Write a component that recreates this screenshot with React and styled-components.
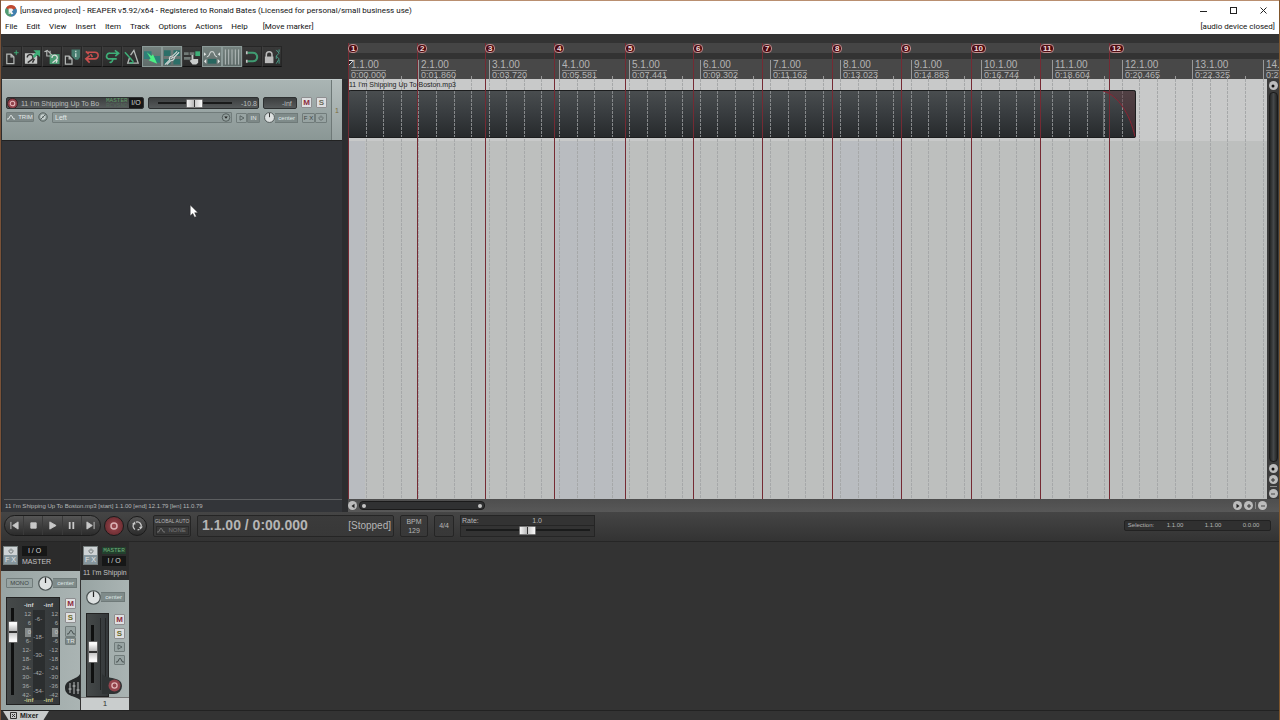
import React from "react"
import styled, { createGlobalStyle, css } from "styled-components"

const GlobalStyle = createGlobalStyle`
  * {
    box-sizing: border-box;
  }
  body {
    margin: 0;
    background: #333;
    font-family: "Liberation Sans", Arial, sans-serif;
  }
  button, input, select {
    margin: 0;
    padding: 0;
    border: 0;
    font: inherit;
    color: inherit;
    background: none;
  }
  svg {
    display: block;
    flex: none;
  }
`

const MEASURE = 70.35
const BEATS = 4

const markers = [0, 70, 138, 207, 278, 346, 415, 485, 554, 624, 693, 762]

const measures = [
  "0:00.000",
  "0:01.860",
  "0:03.720",
  "0:05.581",
  "0:07.441",
  "0:09.302",
  "0:11.162",
  "0:13.023",
  "0:14.883",
  "0:16.744",
  "0:18.604",
  "0:20.465",
  "0:22.325",
  "0:24.186",
]

const ITEM_WIDTH = 788

/* ---------- Window frame ---------- */

const Window = styled.div`
  min-height: 100vh;
  display: flex;
  flex-direction: column;
  border-left: 1px solid #7a5238;
  border-right: 1px solid #80562c;
  background: #333;
  overflow: hidden;
`

const TitleBar = styled.header`
  height: 20px;
  display: flex;
  align-items: center;
  padding-left: 4px;
  border-top: 1px solid #b98f70;
  background: #fff;
  color: #111;
  font: 8px/18px Roboto, sans-serif;
  h1 {
    flex: 1;
    margin: 0 0 0 3px;
    font: inherit;
    white-space: nowrap;
  }
`

const WindowButton = styled.button`
  width: 30px;
  height: 18px;
  display: flex;
  align-items: center;
  justify-content: center;
`

const MenuBar = styled.nav`
  height: 14px;
  display: flex;
  align-items: center;
  gap: 1px;
  background: #fff;
  color: #111;
  font: 8px/14px Roboto, sans-serif;
  padding: 0 4px 0 0;
`

const MenuItem = styled.button`
  padding: 0 4px;
  white-space: nowrap;
  margin-left: ${({ $gap }) => ($gap ? "6px" : "0")};
`

const DeviceStatus = styled.span`
  margin-left: auto;
`

const Main = styled.main`
  flex: 1;
  display: grid;
  grid-template-columns: 347px minmax(0, 1fr);
`

/* ---------- Left side ---------- */

const Side = styled.aside`
  position: relative;
  display: flex;
  flex-direction: column;
  padding-right: 6px;
  background: #2c2d2f;
`

const Toolbar = styled.div`
  height: 45px;
  margin-right: -6px;
  padding: 12px 0 0 1px;
  display: flex;
  background: #333;
`

const ToolButton = styled.button`
  width: 20px;
  height: 21px;
  display: flex;
  align-items: center;
  justify-content: center;
  border: 1px solid #262626;
  border-left-color: #404040;
  border-bottom-color: #111;
  background: linear-gradient(#393939, #2b2b2b);
  ${({ $on }) =>
    $on &&
    css`
      border-color: #8b9a98;
      background: linear-gradient(#75827f, #5f6c6a);
    `}
`

const TrackPanel = styled.section`
  height: 62px;
  display: flex;
  margin-left: 1px;
  border-top: 1px solid #c3cccc;
  border-bottom: 1px solid #222;
  background: linear-gradient(#aab5b4, #8a9795);
`

const TrackControls = styled.div`
  flex: 1;
  padding: 17px 4px 0 4px;
  display: flex;
  flex-direction: column;
  gap: 4px;
`

const Row = styled.div`
  height: 11px;
  display: flex;
  align-items: stretch;
  gap: 4px;
`

const TrackNumber = styled.div`
  width: 13px;
  display: flex;
  align-items: center;
  justify-content: center;
  border-left: 1px solid #6e7877;
  background: linear-gradient(#b6bfbe, #97a2a1);
  color: #7d6d3c;
  font-size: 7px;
`

const DarkBox = styled.div`
  width: ${({ $w }) => $w};
  height: 12px;
  display: flex;
  align-items: center;
  justify-content: space-between;
  padding: ${({ $pad }) => $pad || "0"};
  border: 1px solid #2d3031;
  border-radius: 2px;
  background: linear-gradient(#3c3f40, #55595a);
  color: #b9bdbd;
  font-size: 7px;
  white-space: nowrap;
  overflow: hidden;
`

const TrackName = styled.span`
  flex: 1;
  padding-left: 3px;
`

const MasterSend = styled.span`
  width: 23px;
  display: flex;
  flex-direction: column;
  color: #5f9a66;
  font: 6px/5px "Liberation Mono", monospace;
  span + span {
    color: #52695a;
  }
`

const MasterBadge = styled.span`
  height: 7px;
  margin: 1px 0 2px;
  background: #22402d;
  color: #6fae7c;
  font: 6px/7px "Liberation Mono", monospace;
  text-align: center;
`

const IoButton = styled.button`
  width: ${({ $w }) => $w};
  height: 10px;
  background: #161717;
  color: #d5d5d5;
  font-size: 7px;
  line-height: 10px;
`

const LightButton = styled.button`
  width: 11px;
  height: 11px;
  display: flex;
  align-items: center;
  justify-content: center;
  border: 1px solid #8e8e90;
  border-radius: 1px;
  background: #dedfe1;
  color: ${({ $color }) => $color || "#333"};
  font-size: 8px;
  font-weight: bold;
  line-height: 9px;
`

const FlatButton = styled.button`
  width: ${({ $w }) => $w};
  height: ${({ $h }) => $h || "10px"};
  display: flex;
  align-items: center;
  justify-content: center;
  gap: 3px;
  border: 1px solid #717c7b;
  border-radius: 1px;
  background: ${({ $solid }) => ($solid ? "#7d8887" : "#98a4a3")};
  color: ${({ $solid }) => ($solid ? "#e3e9e9" : "#3c4444")};
  font-size: 6px;
  line-height: 8px;
`

const Group = styled.div`
  display: flex;
  align-items: center;
  margin-left: ${({ $push }) => $push || "0"};
`

const InputSelect = styled.label`
  flex: 1;
  height: 11px;
  display: flex;
  align-items: center;
  border: 1px solid #717c7b;
  border-radius: 1px;
  background: #8c9897;
  select {
    flex: 1;
    height: 9px;
    padding-left: 2px;
    appearance: none;
    outline: 0;
    color: #e3e9e9;
    font-size: 7px;
    line-height: 9px;
  }
`

const Fader = styled.input.attrs({ type: "range" })`
  width: ${({ $w }) => $w};
  height: 9px;
  appearance: none;
  background: linear-gradient(#1a1b1b, #1a1b1b) center / 100% 2px no-repeat;
  &::-webkit-slider-thumb {
    appearance: none;
    width: 17px;
    height: 9px;
    border: 1px solid #777;
    border-radius: 1px;
    background: linear-gradient(
      90deg,
      #f4f4f4,
      #bbb 44%,
      #333 46% 54%,
      #ccc 56%,
      #fafafa
    );
  }
`

const VerticalFader = styled.input.attrs({ type: "range" })`
  width: 11px;
  height: ${({ $h }) => $h};
  margin-top: 7px;
  writing-mode: vertical-lr;
  direction: rtl;
  appearance: none;
  background: linear-gradient(#0f1010, #0f1010) center / 3px 100% no-repeat;
  &::-webkit-slider-thumb {
    appearance: none;
    width: 10px;
    height: 22px;
    border: 1px solid #666;
    border-radius: 1px;
    background: linear-gradient(
      #fafafa 0 10%,
      #b4b4b4 46%,
      #333 46% 54%,
      #c4c4c4 54%,
      #fafafa 90%
    );
  }
`

const EmptyTracks = styled.div`
  flex: 1;
  margin-left: 1px;
  background: #333539;
`

const StatusLine = styled.div`
  height: 13px;
  margin-left: 3px;
  border-top: 1px solid #5c5e60;
  background: #333539;
  color: #b5b7b8;
  font-size: 6px;
  line-height: 12px;
  white-space: nowrap;
  padding-left: 1px;
  box-shadow: -2px 0 0 #333539;
`

const Pointer = styled.svg`
  position: absolute;
  left: 188px;
  top: 170px;
`

/* ---------- Arrange view ---------- */

const Arrange = styled.section`
  position: relative;
  display: flex;
  flex-direction: column;
  overflow: hidden;
`

const MarkerLane = styled.div`
  height: 10px;
  margin-top: 9px;
  background: #454545;
`

const Ruler = styled.div`
  position: relative;
  height: 20px;
  margin-top: 6px;
  overflow: hidden;
  background: #484848;
  svg {
    width: 100%;
    height: 20px;
  }
`

const RulerLabel = styled.div`
  position: absolute;
  top: 1px;
  color: #b4b4b4;
  font-size: 9px;
  line-height: 9px;
  padding-left: 3px;
  b {
    display: block;
    border-bottom: 1px solid #8b8b8b;
    font-size: 10px;
    font-weight: normal;
    line-height: 10px;
  }
`

const ArrangeBody = styled.div`
  flex: 1;
  display: flex;
`

const Canvas = styled.div`
  position: relative;
  flex: 1;
  overflow: hidden;
  background: #bdbfbe;
`

const GridLines = styled.svg`
  position: absolute;
  width: 100%;
  height: 100%;
`

const MediaItem = styled.div`
  position: absolute;
  top: 0;
  left: 0;
  span {
    display: block;
    height: 11px;
    padding-left: 1px;
    color: #222;
    font-size: 7px;
    line-height: 12px;
  }
`

const MarkerPin = styled.div`
  position: absolute;
  top: 9px;
  bottom: 13px;
  border-left: 1px solid #752a33;
  span {
    display: block;
    min-width: 9px;
    height: 9px;
    margin: 1px 0 0 -1px;
    padding: 0 2px;
    border: 1px solid #c09090;
    border-radius: 4px;
    background: #4c0a10;
    color: #f0dcdc;
    font-size: 8px;
    font-weight: bold;
    line-height: 7px;
    text-align: center;
  }
`

const VScroll = styled.div`
  width: 12px;
  padding: 2px 0 1px;
  display: flex;
  flex-direction: column;
  align-items: center;
  gap: 2px;
  background: #3b3b3b;
`

const HScroll = styled.div`
  height: 13px;
  padding: 0 12px 0 0;
  display: flex;
  align-items: center;
  gap: 2px;
  background: linear-gradient(#4e4e4e, #585858);
`

const ScrollThumb = styled.div`
  border: 1px solid #1b1b1b;
  border-radius: 4px;
  background: #303132;
  display: flex;
  align-items: center;
  justify-content: space-between;
  ${({ $vertical }) =>
    $vertical
      ? css`
          flex: 1;
          width: 9px;
          background: linear-gradient(90deg, #242525, #45484a, #242525);
        `
      : css`
          width: 126px;
          height: 9px;
          padding: 0 2px;
          margin-right: auto;
        `}
`

const Dot = styled.i`
  width: 4px;
  height: 4px;
  border-radius: 50%;
  background: #c5c5c5;
`

const Divider = styled.i`
  width: ${({ $vertical }) => ($vertical ? "1px" : "7px")};
  height: ${({ $vertical }) => ($vertical ? "7px" : "1px")};
  background: #8a8a8a;
`

const RoundButton = styled.button`
  width: 9px;
  height: 9px;
  flex: none;
  display: flex;
  align-items: center;
  justify-content: center;
  border-radius: 50%;
  background: #bcbcbc;
`

/* ---------- Transport ---------- */

const Transport = styled.section`
  height: 30px;
  display: flex;
  align-items: center;
  padding: 0 8px 2px 3px;
  border-bottom: 1px solid #262626;
  background: linear-gradient(#454545, #333);
  color: #b5b5b5;
`

const TransportPill = styled.div`
  width: 97px;
  height: 21px;
  display: flex;
  border: 1px solid #1b1b1b;
  border-radius: 11px;
  background: linear-gradient(#555, #2b2b2b);
  button {
    flex: 1;
    display: flex;
    align-items: center;
    justify-content: center;
  }
  button + button {
    border-left: 1px solid #3a3a3a;
  }
`

const RoundTransport = styled.button`
  width: 20px;
  height: 20px;
  margin-left: 3px;
  display: flex;
  align-items: center;
  justify-content: center;
  border: 1px solid #1b1b1b;
  border-radius: 50%;
  background: ${({ $record }) =>
    $record
      ? "radial-gradient(#9b4a50, #5e2328)"
      : "linear-gradient(#555, #2b2b2b)"};
`

const Panel = styled.div`
  width: ${({ $w }) => $w};
  height: 22px;
  margin-left: 6px;
  display: flex;
  flex-direction: ${({ $row }) => ($row ? "row" : "column")};
  align-items: center;
  justify-content: ${({ $row }) => ($row ? "space-between" : "center")};
  padding: ${({ $row }) => ($row ? "0 2px 0 4px" : "0")};
  border: 1px solid #252525;
  border-radius: 2px;
  background: linear-gradient(#3b3b3b, #383838);
  font-size: 7px;
  line-height: 9px;
  white-space: nowrap;
  small {
    font-size: 5px;
    line-height: 9px;
  }
  button {
    width: 33px;
    height: 9px;
    display: flex;
    align-items: center;
    gap: 4px;
    border: 1px solid #2b2b2b;
    color: #777;
    font-size: 6px;
    line-height: 6px;
  }
`

const TimeText = styled.span`
  font-size: 14px;
  font-weight: bold;
`

const PlayState = styled.span`
  font-size: 10px;
`

const RatePanel = styled.label`
  width: 135px;
  height: 22px;
  margin-left: 6px;
  display: flex;
  flex-direction: column;
  align-items: center;
  border: 1px solid #252525;
  background: #333;
  font-size: 7px;
  line-height: 9px;
  div {
    align-self: stretch;
    display: grid;
    grid-template-columns: 1fr 1fr 1fr;
    padding-left: 1px;
    height: 10px;
    border-bottom: 1px solid #252525;
  }
  em {
    font-style: normal;
    justify-self: end;
    padding-right: 8px;
  }
`

const Selection = styled.div`
  width: 147px;
  height: 11px;
  margin-left: auto;
  padding-left: 1px;
  display: grid;
  grid-template-columns: 30px 1fr 1fr 1fr;
  border: 1px solid #222;
  border-radius: 2px;
  background: #303030;
  font-size: 6px;
  line-height: 9px;
  text-align: center;
`

/* ---------- Mixer ---------- */

const Mixer = styled.section`
  height: 168px;
  display: flex;
  gap: 1px;
  background: #333;
`

const Strip = styled.div`
  width: ${({ $w }) => $w};
  display: flex;
  flex-direction: column;
  background: #2b2b2b;
`

const StripHead = styled.div`
  height: ${({ $h }) => $h};
  display: flex;
  padding: 4px 0 0 2px;
  color: #c3c3c3;
  font-size: 7px;
  line-height: 10px;
  flex-wrap: wrap;
  align-content: flex-start;
  column-gap: 4px;
`

const FxStack = styled.div`
  width: 15px;
  height: 19px;
  display: flex;
  flex-direction: column;
  border: 1px solid #777f7f;
  background: #cfd4d6;
  button {
    height: 9px;
    display: flex;
    align-items: center;
    justify-content: center;
    font-size: 7px;
    line-height: 9px;
    color: #39424b;
  }
  button + button {
    background: #87979e;
    color: #e5eaea;
  }
`

const HeadColumn = styled.div`
  display: flex;
  flex-direction: column;
  color: #c3c3c3;
`

const HeadName = styled.span`
  line-height: ${({ $lh }) => $lh || "12px"};
  white-space: nowrap;
`

const StripBody = styled.div`
  position: relative;
  flex: 1;
  display: flex;
  flex-direction: column;
  padding: ${({ $top }) => $top} 3px 0 5px;
  background: linear-gradient(90deg, #98a4a3, #aab4b3);
`

const PanRow = styled.div`
  height: 16px;
  display: flex;
  align-items: center;
`

const PanLabel = styled.span`
  width: ${({ $w }) => $w || "24px"};
  height: 10px;
  padding-right: 2px;
  border: 1px solid #6f7a79;
  border-left: 0;
  background: #7f8b8a;
  color: #dfe6e6;
  font-size: 6px;
  line-height: 8px;
  text-align: right;
`

const FaderRow = styled.div`
  display: flex;
  gap: 5px;
  margin-top: ${({ $top }) => $top};
`

const MeterBox = styled.div`
  width: ${({ $w }) => $w};
  height: ${({ $h }) => $h};
  padding: ${({ $pad }) => $pad};
  display: flex;
  border: 1px solid #222;
  background: linear-gradient(90deg, #454949, #34383a);
`

const Scale = styled.div`
  flex: 1;
  display: flex;
  flex-direction: column;
  margin-left: 1px;
  color: #a9adad;
  font-size: 6px;
  line-height: 9px;
`

const Peaks = styled.div`
  display: flex;
  justify-content: space-around;
  font-weight: bold;
  line-height: ${({ $low }) => ($low ? "7px" : "9px")};
  color: ${({ $low }) => ($low ? "#c6c98a" : "#d5d7d7")};
`

const ScaleColumns = styled.div`
  display: flex;
  justify-content: space-between;
  margin-bottom: -3px;
`

const ScaleColumn = styled.div`
  width: 12px;
  display: flex;
  flex-direction: column;
  text-align: ${({ $align }) => $align};
  line-height: ${({ $step }) => $step};
  background: ${({ $bar }) => ($bar ? "#2b2e2f" : "transparent")};
  mark {
    width: 6px;
    margin-left: auto;
    background: #848989;
    color: #c8c8c8;
  }
`

const SideButtons = styled.div`
  display: flex;
  flex-direction: column;
  gap: 3px;
  padding-top: 1px;
`

const ChannelMeter = styled.div`
  width: 6px;
  height: 72px;
  margin-left: 2px;
  border-left: 1px solid #232525;
  border-right: 1px solid #232525;
`

const Corner = styled.div`
  position: absolute;
  right: ${({ $right }) => $right};
  bottom: ${({ $bottom }) => $bottom};
`

const StripNumber = styled.div`
  height: 13px;
  border-top: 1px solid #777;
  background: #c9cdcd;
  color: #333;
  font-size: 8px;
  line-height: 12px;
  text-align: center;
`

const Dock = styled.footer`
  height: 10px;
  padding-left: 2px;
  border-top: 1px solid #222;
  background: #333;
`

const DockTab = styled.button`
  width: 46px;
  height: 9px;
  display: flex;
  align-items: center;
  gap: 3px;
  padding-left: 7px;
  clip-path: polygon(0 0, 100% 0, 88% 100%, 12% 100%);
  background: #c9cccc;
  color: #222;
  font-size: 7px;
  font-weight: bold;
  line-height: 9px;
`

/* ---------- Drawings ---------- */

const Logo = () => (
  <svg width="12" height="12" viewBox="0 0 12 12">
    <circle cx="6" cy="6" r="5.6" fill="#4b5a63" />
    <path d="M6 6 L1 3 A5.6 5.6 0 0 1 11 3.2 Z" fill="#c2492f" />
    <path d="M6 6 L11 3.2 A5.6 5.6 0 0 1 6 11.6 Z" fill="#3f7fae" />
    <path d="M6 6 L6 11.6 A5.6 5.6 0 0 1 1 3 Z" fill="#4f9a70" />
    <path d="M3.6 3.4 h3.4 l1.4 1.6 -1.5 1.5 1.5 2.4 -2.3 .4 -1.4-2.4 v2 h-1z" fill="#f3f3f3" />
  </svg>
)

const gray = "#b4b8b6"
const green = "#3fae78"

const toolIcons = [
  {
    name: "New project",
    art: (
      <>
        <path d="M4 6h4.500l3 3v7h-7.500z M8.500 6v3h3" stroke={gray} fill="none" strokeWidth="1.300" />
        <path d="M14 2v5M11.500 4.500h5" stroke={green} />
      </>
    ),
  },
  {
    name: "Open project",
    art: (
      <>
        <path d="M2 5h11v3h2v8h-13z" fill="#c4c6c5" />
        <path d="M4.500 9.500a3 3 0 1 1 4.500 2.500l-4 3M12 11l-2 4" stroke="#333" fill="none" strokeWidth="1.500" />
        <path d="M11 2h7v7l-2.500-2.500-3.500 3.500-2-2 3.500-3.500z" fill={green} />
      </>
    ),
  },
  {
    name: "Save project",
    art: (
      <>
        <path d="M7 6h10.500v10.500h-10.500z" fill="#4a9a72" />
        <path d="M9.500 10a2.800 2.800 0 1 1 4.500 2l-4 3M15 12l-1 3" stroke="#ddd" fill="none" strokeWidth="1.400" />
        <path d="M1.500 3.500l3-1.500 5 5M7.500 2.500v3M4 3v5h4" stroke={gray} fill="none" strokeWidth="1.200" />
      </>
    ),
  },
  {
    name: "Project settings",
    art: (
      <>
        <path d="M2.500 8h4l3 3v5.500h-7z M6.500 8v3h3" stroke={gray} fill="none" strokeWidth="1.300" />
        <path d="M9 1h9v8l-2 3h-3l-4-4z" fill="#477d6f" />
        <path d="M13.500 2.500v1.500M13.500 5v4" stroke="#cfe0da" strokeWidth="1.300" />
      </>
    ),
  },
  {
    name: "Undo",
    art: (
      <path
        d="M3 3l3 3M3 4h9.500a3.500 3.500 0 0 1 0 7h-9M7 7.500l-4 3.500 4 4M8 6l2 3"
        stroke="#c9504f"
        fill="none"
        strokeWidth="1.700"
      />
    ),
  },
  {
    name: "Redo",
    art: (
      <path
        d="M16 5h-8.500a3.200 3.200 0 0 0-2 6h9M12.500 2l4 3-3.500 3M7 14c2 2 3-1 4-4"
        stroke={green}
        fill="none"
        strokeWidth="1.700"
      />
    ),
  },
  {
    name: "Metronome",
    art: (
      <>
        <path d="M8 7l3.500-5 4.500 13.500h-11l2-6" stroke={gray} fill="none" strokeWidth="1.400" />
        <path d="M2 4l9 10M7 15h4" stroke={green} strokeWidth="1.600" />
      </>
    ),
  },
  {
    name: "Auto-crossfade",
    on: true,
    art: (
      <>
        <path d="M1 3h8v8h-8z M11 8h7v7h-7z" fill="#2f7f78" />
        <path d="M4 4l5 4 1.500-2 4.500 10-9-3.500 2-2z" fill="#4df083" />
      </>
    ),
  },
  {
    name: "Item grouping",
    on: true,
    art: (
      <>
        <path d="M1 2h7v6h-7z M11 2h7v6h-7z M1 11h7v6h-7z M11 11h7v6h-7z" fill="#2c6f68" />
        <path d="M2 17l5-5c-1-3 1-4 3-4l5-5M4 17l4-4c3 0 4-1 4-4l5-5M8 11l3-2" stroke="#d3d9d7" fill="none" strokeWidth="1.200" />
      </>
    ),
  },
  {
    name: "Ripple editing",
    art: (
      <>
        <path d="M1 4h5v3h-5z M7 4h5v3h-5z M1 9h7v3h-7z" fill="#717a77" />
        <path d="M13 3h5v5h-5z" fill={green} />
        <path d="M9 7h2v4h5v4l-2 2h-4l-3-4 2-1z" fill="#c8cbca" />
      </>
    ),
  },
  {
    name: "Envelope points",
    on: true,
    art: (
      <>
        <path d="M4 9l2-1 2-4.500h3l2 4.500 2 1" stroke="#e0e5e3" fill="none" />
        <path d="M5 11h9v5h-9z" fill="#27665f" />
        <path d="M1 4l2.500 2-2.500 2zM18 4l-2.500 2 2.500 2zM3.500 11l-2.500 2.500 2.500 2.500zM15.500 11l2.500 2.500-2.500 2.500z" fill="#dfe4e2" />
      </>
    ),
  },
  {
    name: "Grid",
    on: true,
    art: <path d="M2.500 1v16M6 1v16M9.500 1v16M13 1v16M16.500 1v16" stroke="#b7c0be" />,
  },
  {
    name: "Snap",
    art: (
      <>
        <path d="M5 4.500h5.500a4.500 4.500 0 0 1 0 9h-5.500" stroke="#409b72" fill="none" strokeWidth="2.200" />
        <path d="M4 3v3M4 12v3" stroke="#c2c6c4" strokeWidth="1.800" />
      </>
    ),
  },
  {
    name: "Locking",
    art: (
      <>
        <path d="M3.500 9v-2.500a3 3 0 0 1 6 0v2.500" stroke="#bbb" fill="none" strokeWidth="1.600" />
        <path d="M2 8.500h9v7h-9z" fill="#bbb" />
        <path d="M14 1.500l3 3.500-3 3 3 3-3 5M17 1v3M14 8v3M17 12v4" stroke="#4b9d88" fill="none" />
      </>
    ),
  },
]

const RecordRing = () => (
  <svg width="11" height="11" viewBox="0 0 12 12">
    <circle cx="6" cy="6" r="5.500" fill="#93434c" stroke="#3a1f22" />
    <circle cx="6" cy="6" r="2.500" fill="none" stroke="#e2b5b8" strokeWidth="1.200" />
  </svg>
)

const Knob = ({ size }) => (
  <svg width={size} height={size} viewBox="0 0 16 16">
    <circle cx="8" cy="8" r="7.200" fill="#dde1e1" stroke="#4a5252" strokeWidth="1.300" />
    <path d="M8 1.500v6" stroke="#222" strokeWidth="1.300" />
  </svg>
)

const Envelope = ({ color = "#444d4d" }) => (
  <svg width="8" height="6" viewBox="0 0 8 6">
    <path d="M0 5h1.500l2-3.500h1l2 3.500h1.500" stroke={color} fill="none" />
  </svg>
)

const Power = () => (
  <svg width="6" height="6" viewBox="0 0 6 6">
    <path d="M1.800 1.500a2 2 0 1 0 2.400 0M3 .5v2.500" stroke="#5d6666" fill="none" strokeWidth=".8" />
  </svg>
)

const PlayOutline = () => (
  <svg width="6" height="6" viewBox="0 0 6 6">
    <path d="M1 .8l4 2.200-4 2.200z" stroke="#4b5555" fill="none" strokeWidth=".8" />
  </svg>
)

const Sign = ({ kind }) => {
  const shapes = {
    dot: <circle cx="3" cy="3" r="1.500" fill="#111" />,
    left: <path d="M4.500 .8v4.400l-3-2.200z" fill="#222" />,
    right: <path d="M1.500 .8v4.400l3-2.200z" fill="#222" />,
    plus: <path d="M1 3h4M3 1v4" stroke="#333" />,
    minus: <path d="M1 3h4" stroke="#444" />,
  }
  return (
    <svg width="6" height="6" viewBox="0 0 6 6">
      {shapes[kind]}
    </svg>
  )
}

const transportIcons = [
  ["Go to start", "M1 1v8M9 1l-6 4 6 4z"],
  ["Stop", "M2 2h6v6h-6z"],
  ["Play", "M2 1l7 4-7 4z"],
  ["Pause", "M3 1v8M7 1v8"],
  ["Go to end", "M9 1v8M1 1l6 4-6 4z"],
]

const beatLines = from =>
  Array.from({ length: 120 }, (_, i) =>
    Math.round(((i + from) * MEASURE) / BEATS)
  )

/* ---------- Parts ---------- */

const TrackRow = () => (
  <TrackPanel>
    <TrackControls>
      <Row>
        <DarkBox $w="138px">
          <RecordRing />
          <TrackName>11 I'm Shipping Up To Bo</TrackName>
          <MasterSend>
            <span>MASTER</span>
            <span>RCVSND</span>
          </MasterSend>
          <IoButton $w="14px">I/O</IoButton>
        </DarkBox>
        <DarkBox $w="111px" $pad="0 1px 0 9px">
          <Fader $w="74px" aria-label="Track volume" defaultValue={49} />
          <span>-10.8</span>
        </DarkBox>
        <DarkBox $w="34px" $pad="0 4px 0 18px">
          -inf
        </DarkBox>
        <LightButton $color="#8d2c3c">M</LightButton>
        <LightButton $color="#6c6c5a">S</LightButton>
      </Row>
      <Row>
        <FlatButton $w="28px" $solid>
          <Envelope color="#e3e9e9" />
          TRIM
        </FlatButton>
        <svg width="10" height="10" viewBox="0 0 10 10">
          <circle cx="5" cy="5" r="4.200" fill="#93a09e" stroke="#56605f" />
          <circle cx="5" cy="5" r="2" fill="none" stroke="#dfe5e5" />
          <path d="M2.500 7.500l5-5" stroke="#56605f" />
        </svg>
        <InputSelect>
          <select aria-label="Record input" defaultValue="Left">
            <option>Left</option>
            <option>Right</option>
          </select>
          <svg width="10" height="9" viewBox="0 0 10 10">
            <circle cx="5" cy="5" r="4.200" fill="#93a09e" stroke="#4e5857" />
            <path d="M3 4h4l-2 2.500z" fill="#222" />
          </svg>
        </InputSelect>
        <Group>
          <FlatButton $w="11px" aria-label="Monitor">
            <PlayOutline />
          </FlatButton>
          <FlatButton $w="13px" $solid>
            IN
          </FlatButton>
        </Group>
        <Group>
          <Knob size={11} />
          <PanLabel $w="23px">center</PanLabel>
        </Group>
        <Group>
          <FlatButton $w="13px">F X</FlatButton>
          <FlatButton $w="12px" aria-label="Bypass effects">
            <Power />
          </FlatButton>
        </Group>
      </Row>
    </TrackControls>
    <TrackNumber>1</TrackNumber>
  </TrackPanel>
)

const Timeline = () => (
  <Canvas>
    <GridLines>
      <rect width="100%" height="62" fill="#c8c9c9" />
      <rect x="0" y="62" width="17" height="100%" fill="#b9bcc0" />
      <rect x="208" y="62" width="69" height="100%" fill="#b9bcc0" />
      <rect x="486" y="62" width="68" height="100%" fill="#b9bcc0" />
      {beatLines(1).map(x => (
        <line
          key={x}
          x1={x + 0.5}
          x2={x + 0.5}
          y1="0"
          y2="100%"
          stroke="#a6a8a9"
          strokeDasharray="3 1"
        />
      ))}
    </GridLines>
    <MediaItem>
      <span>11 I'm Shipping Up To Boston.mp3</span>
      <svg width={ITEM_WIDTH} height="48">
        <defs>
          <linearGradient id="item" x2="0" y2="1">
            <stop offset="0" stopColor="#4a4e50" />
            <stop offset=".5" stopColor="#383c3f" />
            <stop offset="1" stopColor="#26292b" />
          </linearGradient>
        </defs>
        <rect width={ITEM_WIDTH} height="48" rx="2" fill="url(#item)" />
        {beatLines(1)
          .filter(x => x < ITEM_WIDTH - 10)
          .map(x => (
            <line
              key={x}
              x1={x + 0.5}
              x2={x + 0.5}
              y1="1"
              y2="47"
              stroke="#85888a"
              strokeDasharray="3 1"
            />
          ))}
        <path d="M755 1C770 5 782 24 787 47V1z" fill="#5a3038" opacity=".45" />
        <path d="M755.500 1v46" stroke="#6d7072" />
        <path d="M755 1C770 5 782 24 787 47" stroke="#8d2232" fill="none" />
        <rect x=".5" y=".5" width={ITEM_WIDTH - 1} height="47" rx="2" fill="none" stroke="#1c1d1e" />
      </svg>
    </MediaItem>
  </Canvas>
)

const scaleLeft = ["12", "6", "0", "6-", "12-", "18-", "24-", "30-", "36-", "42-"]
const scaleRight = ["12", "6", "0", "-6", "-12", "-18", "-24", "-30", "-36", "-42"]
const scaleMiddle = ["-6-", "-18-", "-30-", "-42-", "-54-"]

const DbScale = ({ steps }) => (
  <ScaleColumn $align="right" $step="9px">
    {steps.map(s =>
      s === "0" ? <mark key={s}>{s}</mark> : <span key={s}>{s}</span>
    )}
  </ScaleColumn>
)

const MasterStrip = () => (
  <Strip $w="79px">
    <StripHead $h="29px">
      <FxStack>
        <button aria-label="Bypass master effects">
          <Power />
        </button>
        <button>F X</button>
      </FxStack>
      <HeadColumn>
        <IoButton $w="25px">I / O</IoButton>
        <HeadName>MASTER</HeadName>
      </HeadColumn>
    </StripHead>
    <StripBody $top="4px">
      <PanRow>
        <FlatButton $w="27px">MONO</FlatButton>
        <Group $push="5px">
          <Knob size={15} />
          <PanLabel>center</PanLabel>
        </Group>
      </PanRow>
      <FaderRow $top="6px">
        <MeterBox $w="54px" $h="108px" $pad="3px 1px 0 0">
          <VerticalFader $h="87px" aria-label="Master volume" defaultValue={80} />
          <Scale>
            <Peaks>
              <span>-inf</span>
              <span>-inf</span>
            </Peaks>
            <ScaleColumns>
              <DbScale steps={scaleLeft} />
              <ScaleColumn $align="center" $step="18px" $bar>
                {scaleMiddle.map(s => (
                  <span key={s}>{s}</span>
                ))}
              </ScaleColumn>
              <DbScale steps={scaleRight} />
            </ScaleColumns>
            <Peaks $low>
              <span>-inf</span>
              <span>-inf</span>
            </Peaks>
          </Scale>
        </MeterBox>
        <SideButtons>
          <LightButton $color="#8d2c3c">M</LightButton>
          <LightButton $color="#6c6c2a">S</LightButton>
          <div>
            <FlatButton $w="11px" $h="11px" aria-label="Master envelope">
              <Envelope />
            </FlatButton>
            <FlatButton $w="11px" $h="8px" $solid>
              TR
            </FlatButton>
          </div>
        </SideButtons>
      </FaderRow>
      <Corner $right="0" $bottom="10px">
        <svg width="15" height="26" viewBox="0 0 15 26">
          <path d="M15 0C12 6 0 5 0 14s12 8 15 12z" fill="#26292a" />
          <path d="M5 9v10M9 8v12M13 8v12M3.500 15h3M7.500 12h3M11.500 16h3" stroke="#b9bdbd" />
        </svg>
      </Corner>
    </StripBody>
  </Strip>
)

const ChannelStrip = () => (
  <Strip $w="48px">
    <StripHead $h="38px">
      <FxStack>
        <button aria-label="Bypass track effects">
          <Power />
        </button>
        <button>F X</button>
      </FxStack>
      <HeadColumn>
        <MasterBadge>MASTER</MasterBadge>
        <IoButton $w="24px">I / O</IoButton>
      </HeadColumn>
      <HeadName $lh="14px">11 I'm Shippin</HeadName>
    </StripHead>
    <StripBody $top="9px">
      <PanRow>
        <Knob size={15} />
        <PanLabel>center</PanLabel>
      </PanRow>
      <FaderRow $top="8px">
        <MeterBox $w="23px" $h="84px" $pad="4px 0 0 0">
          <VerticalFader $h="58px" aria-label="Track volume" defaultValue={55} />
          <ChannelMeter />
        </MeterBox>
        <SideButtons>
          <LightButton $color="#8d2c3c">M</LightButton>
          <LightButton $color="#6c6c2a">S</LightButton>
          <FlatButton $w="11px" aria-label="Monitor input">
            <PlayOutline />
          </FlatButton>
          <FlatButton $w="11px" aria-label="Track envelope">
            <Envelope />
          </FlatButton>
        </SideButtons>
      </FaderRow>
      <Corner $right="7px" $bottom="2px">
        <svg width="20" height="22" viewBox="0 0 20 22">
          <path d="M0 0C1 7 20 2 20 13a8 8 0 0 1-8 8H0z" fill="#2f3334" />
          <circle cx="12.500" cy="12.500" r="6" fill="#93434c" />
          <circle cx="12.500" cy="12.500" r="2.600" fill="none" stroke="#e2b5b8" strokeWidth="1.300" />
        </svg>
      </Corner>
    </StripBody>
    <StripNumber>1</StripNumber>
  </Strip>
)

const menus = ["File", "Edit", "View", "Insert", "Item", "Track", "Options", "Actions", "Help"]

const App = () => (
  <Window>
    <GlobalStyle />
    <TitleBar>
      <Logo />
      <h1>
        [unsaved project] - REAPER v5.92/x64 - Registered to Ronald Bates
        (Licensed for personal/small business use)
      </h1>
      <WindowButton aria-label="Minimize">
        <svg width="8" height="8">
          <path d="M0 4.500h7" stroke="#222" />
        </svg>
      </WindowButton>
      <WindowButton aria-label="Maximize">
        <svg width="8" height="8">
          <rect x=".5" y=".5" width="6" height="6" fill="none" stroke="#222" />
        </svg>
      </WindowButton>
      <WindowButton aria-label="Close">
        <svg width="8" height="8">
          <path d="M.5 .5l6 6M6.500 .5l-6 6" stroke="#222" />
        </svg>
      </WindowButton>
    </TitleBar>
    <MenuBar>
      {menus.map(m => (
        <MenuItem key={m}>{m}</MenuItem>
      ))}
      <MenuItem $gap>[Move marker]</MenuItem>
      <DeviceStatus>[audio device closed]</DeviceStatus>
    </MenuBar>
    <Main>
      <Side>
        <Toolbar>
          {toolIcons.map(({ name, on, art }) => (
            <ToolButton key={name} $on={on} aria-label={name}>
              <svg width="18" height="18" viewBox="0 0 19 18">
                {art}
              </svg>
            </ToolButton>
          ))}
        </Toolbar>
        <TrackRow />
        <EmptyTracks />
        <StatusLine>
          11 I'm Shipping Up To Boston.mp3 [start] 1.1.00 [end] 12.1.79 [len]
          11.0.79
        </StatusLine>
        <Pointer width="10" height="14" viewBox="0 0 9 13">
          <path d="M1 1v10l2.400-2.200 1.600 3.500 1.700-.8-1.600-3.400h3.100z" fill="#fff" stroke="#222" strokeWidth=".4" />
        </Pointer>
      </Side>
      <Arrange>
        <MarkerLane />
        <Ruler>
          <svg>
            {beatLines(0).map((x, i) => (
              <line
                key={x}
                x1={x + 0.5}
                x2={x + 0.5}
                y1={i % BEATS ? 17 : 1}
                y2="20"
                stroke="#999"
              />
            ))}
            <path d="M0 1h6l-6 6z" fill="#222" />
            <path d="M0 1.500h5M0 7l6-6" stroke="#e0e0e0" />
          </svg>
          {measures.map((time, i) => (
            <RulerLabel key={time} style={{ left: Math.round(i * MEASURE) }}>
              <b>{i + 1}.1.00</b>
              {time}
            </RulerLabel>
          ))}
        </Ruler>
        <ArrangeBody>
          <Timeline />
          <VScroll>
            <RoundButton aria-label="Scroll up">
              <Sign kind="dot" />
            </RoundButton>
            <ScrollThumb $vertical />
            <RoundButton aria-label="Scroll down">
              <Sign kind="dot" />
            </RoundButton>
            <RoundButton aria-label="Zoom in vertically">
              <Sign kind="plus" />
            </RoundButton>
            <Divider />
            <RoundButton aria-label="Zoom out vertically">
              <Sign kind="minus" />
            </RoundButton>
          </VScroll>
        </ArrangeBody>
        <HScroll>
          <RoundButton aria-label="Scroll left">
            <Sign kind="left" />
          </RoundButton>
          <ScrollThumb>
            <Dot />
            <Dot />
          </ScrollThumb>
          <RoundButton aria-label="Scroll right">
            <Sign kind="right" />
          </RoundButton>
          <RoundButton aria-label="Zoom in">
            <Sign kind="plus" />
          </RoundButton>
          <Divider $vertical />
          <RoundButton aria-label="Zoom out">
            <Sign kind="minus" />
          </RoundButton>
        </HScroll>
        {markers.map((x, i) => (
          <MarkerPin key={x} style={{ left: Math.max(x - 1, 0) }}>
            <span>{i + 1}</span>
          </MarkerPin>
        ))}
      </Arrange>
    </Main>
    <Transport>
      <TransportPill>
        {transportIcons.map(([name, d]) => (
          <button key={name} aria-label={name}>
            <svg width="9" height="9" viewBox="0 0 10 10">
              <path d={d} fill="#c9c9c9" stroke="#c9c9c9" strokeWidth={name === "Pause" ? 2 : 1} />
            </svg>
          </button>
        ))}
      </TransportPill>
      <RoundTransport $record aria-label="Record">
        <svg width="10" height="10">
          <circle cx="5" cy="5" r="3" fill="none" stroke="#dcb4b6" strokeWidth="1.500" />
        </svg>
      </RoundTransport>
      <RoundTransport aria-label="Repeat">
        <svg width="12" height="12" viewBox="0 0 12 12">
          <path d="M4 9.500A4 4 0 0 1 3 3.500M5 2.200a4 4 0 0 1 5 5.300M8.500 9.300l-2 .7" stroke="#c9c9c9" fill="none" strokeWidth="1.300" />
          <path d="M1 4l3-2.500.5 3zM8 7l4-.5-2.500 3z" fill="#c9c9c9" />
        </svg>
      </RoundTransport>
      <Panel $w="38px">
        <small>GLOBAL AUTO</small>
        <button>
          <Envelope color="#777" />
          NONE
        </button>
      </Panel>
      <Panel $w="197px" $row>
        <TimeText>1.1.00 / 0:00.000</TimeText>
        <PlayState>[Stopped]</PlayState>
      </Panel>
      <Panel $w="28px">
        <span>BPM</span>
        <span>129</span>
      </Panel>
      <Panel $w="20px">4/4</Panel>
      <RatePanel>
        <div>
          <span>Rate:</span>
          <em>1.0</em>
        </div>
        <Fader $w="124px" aria-label="Play rate" defaultValue={50} />
      </RatePanel>
      <Selection>
        <span>Selection:</span>
        <span>1.1.00</span>
        <span>1.1.00</span>
        <span>0.0.00</span>
      </Selection>
    </Transport>
    <Mixer>
      <MasterStrip />
      <ChannelStrip />
    </Mixer>
    <Dock>
      <DockTab>
        <svg width="7" height="7" viewBox="0 0 7 7">
          <path d="M.5 .5h6v6h-6z M2 2l3 3M5 2l-3 3" stroke="#333" fill="none" />
        </svg>
        Mixer
      </DockTab>
    </Dock>
  </Window>
)

export default App
